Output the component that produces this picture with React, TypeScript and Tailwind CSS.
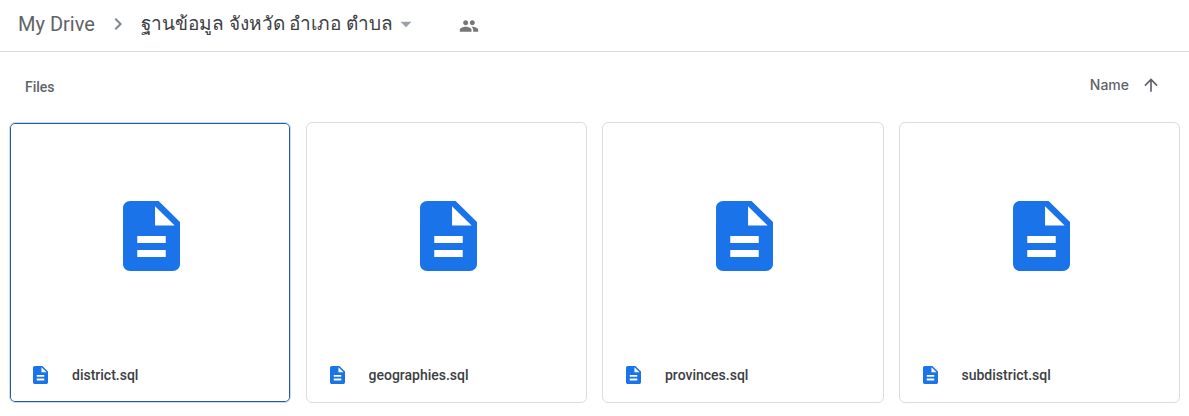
import { MdArrowDropDown, MdArrowUpward, MdChevronRight, MdPeople } from 'react-icons/md';
import { clsx } from 'clsx';

const files = ['district.sql', 'geographies.sql', 'provinces.sql', 'subdistrict.sql'];

function FileIcon({ className }: { className?: string }) {
  return (
    <svg
      viewBox="4 2 16 20"
      preserveAspectRatio="none"
      fill="currentColor"
      className={clsx('shrink-0 text-[#1a73e8]', className)}
      aria-hidden="true"
    >
      <path d="M14 2H6c-1.1 0-1.99.9-1.99 2L4 20c0 1.1.89 2 1.99 2H18c1.1 0 2-.9 2-2V8l-6-6zm2 16H8v-2h8v2zm0-4H8v-2h8v2zm-3-5V3.5L18.5 9H13z" />
    </svg>
  );
}

function FileCard({ name, selected }: { name: string; selected: boolean }) {
  return (
    <button
      type="button"
      aria-pressed={selected}
      className={clsx(
        'flex h-[281px] min-w-0 flex-col rounded-md border bg-white text-left',
        selected ? 'border-[#c6dafc] inset-ring inset-ring-[#2a579a]' : 'border-[#dadce0]'
      )}
    >
      <span className="flex w-full flex-1 items-center justify-center pl-1">
        <FileIcon className="h-[70px] w-[57px]" />
      </span>
      <span className="flex h-[54px] w-full items-center gap-6 px-[23px]">
        <FileIcon className="h-[18px] w-[15px]" />
        <span className="truncate text-sm font-medium text-[#3c4043]">{name}</span>
      </span>
    </button>
  );
}

export default function App() {
  return (
    <main className="bg-white font-['Roboto','Noto_Sans',sans-serif]">
      {/* Breadcrumbs */}
      <header className="flex h-[52px] items-center border-b border-[#dadce0] px-[18px] pb-1">
        <nav className="flex items-center gap-[11px]" aria-label="Breadcrumb">
          <a href="#" className="text-xl text-[#5f6368]">My Drive</a>
          <MdChevronRight className="size-6 text-[#80868b]" aria-hidden="true" />
          <button type="button" className="flex items-center text-[19px] text-[#3c4043]">
            <span className="pt-0.5">ฐานข้อมูล จังหวัด อำเภอ ตำบล</span>
            <MdArrowDropDown className="size-[26px] text-[#9aa0a6]" aria-hidden="true" />
          </button>
        </nav>
        <button type="button" aria-label="Manage members" className="ml-10 pt-1 text-[#777777]">
          <MdPeople className="size-5" />
        </button>
      </header>

      {/* List heading and sort order */}
      <div className="flex h-[70px] items-center justify-between pl-[25px] pr-7">
        <h2 className="text-sm font-medium text-[#5f6368]">Files</h2>
        <button
          type="button"
          className="flex items-center gap-3 pb-1 font-['Inter','Roboto',sans-serif] text-sm font-medium text-[#5f6368]"
        >
          Name
          <MdArrowUpward className="size-5" aria-hidden="true" />
        </button>
      </div>

      <section className="grid grid-cols-4 gap-[15px] px-[9px] pb-3" aria-label="Files">
        {files.map((name, i) => (
          <FileCard key={name} name={name} selected={i === 0} />
        ))}
      </section>
    </main>
  );
}
